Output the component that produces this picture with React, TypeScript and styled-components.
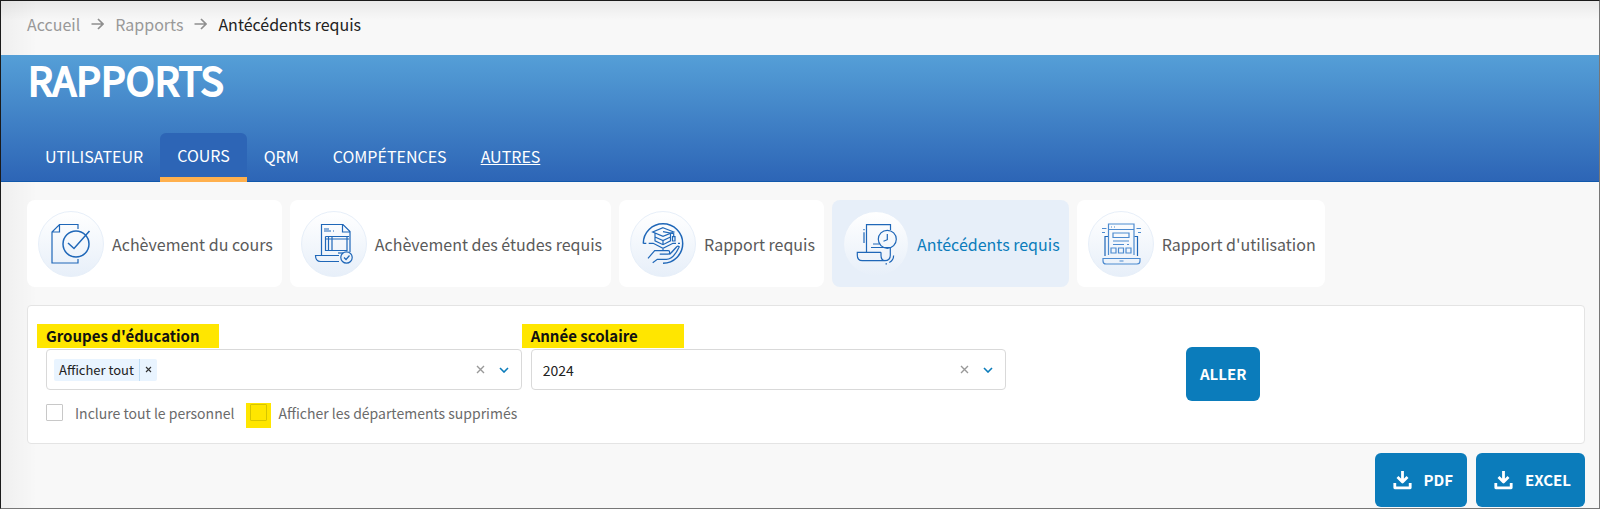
import React, { useState } from "react";
import styled, { createGlobalStyle } from "styled-components";

const GlobalStyle = createGlobalStyle`
  *, *::before, *::after { box-sizing: border-box; }
  body {
    margin: 0;
    background: #f8f8f8;
    color: #222;
    font-family: "Noto Sans CJK SC", "Noto Sans", sans-serif;
    font-size: 16px;
    line-height: 24px;
  }
  button, input, select { font: inherit; color: inherit; }
`;

const Page = styled.div`
  min-height: 100vh;
  border: 1px solid #1a1a1a;
  border-right-color: #777;
  border-bottom-color: #777;
  background:
    linear-gradient(to right, rgba(0, 0, 0, 0.04), transparent 36px),
    linear-gradient(to bottom, rgba(0, 0, 0, 0.06), transparent 20px),
    #f8f8f8;
`;

const Breadcrumb = styled.nav`
  padding: 11px 26px 19px;
  ol {
    display: flex;
    align-items: center;
    gap: 11px;
    margin: 0;
    padding: 0;
    list-style: none;
  }
  li {
    display: flex;
    align-items: center;
    gap: 11px;
  }
`;

const CrumbLink = styled.a`
  color: #999;
  text-decoration: none;
`;

const Header = styled.header`
  padding: 0 26px;
  background: linear-gradient(to bottom, #559fd7, #2d65b6);
  border-bottom: 1px solid #1158ab;
  color: #fff;
`;

const Title = styled.h1`
  margin: 0;
  padding-left: 1px;
  font-size: 39px;
  line-height: 48px;
  font-weight: 400;
  -webkit-text-stroke: 2px #fff;
`;

const Tabs = styled.nav`
  display: flex;
  align-items: flex-end;
  padding: 30px 1px 0;
`;

const Tab = styled.a<{ $active?: boolean; $underline?: boolean }>`
  padding: 10px 17px 13px;
  color: #fff;
  text-decoration: ${(p) => (p.$underline ? "underline" : "none")};
  ${(p) =>
    p.$active &&
    `
    padding-bottom: 10px;
    background: #2d65b6;
    border-radius: 6px 6px 0 0;
    border-bottom: 5px solid #ffb04d;
    margin-bottom: -1px;
  `}
`;

const Content = styled.main`
  padding: 18px 14px 1px 26px;
`;

const Cards = styled.nav`
  display: flex;
  flex-wrap: wrap;
  gap: 8px;
`;

const Card = styled.a<{ $active?: boolean }>`
  display: flex;
  align-items: center;
  gap: 8px;
  padding: 11px 9px 10px 11px;
  border-radius: 8px;
  background: ${(p) => (p.$active ? "#e7eff9" : "#fff")};
  color: ${(p) => (p.$active ? "#0b7cbb" : "#5a5a5a")};
  text-decoration: none;
`;

const IconDisc = styled.span`
  display: grid;
  place-items: center;
  width: 66px;
  height: 66px;
  border-radius: 50%;
  border: 1px solid #e7eff9;
  background: linear-gradient(to bottom, #fff, #e7eff9);
`;

const Panel = styled.form`
  display: grid;
  grid-template-columns: 19fr 19fr 22fr;
  column-gap: 9px;
  margin-top: 18px;
  padding: 18px 18px 15px 18px;
  border: 1px solid #e4e4e4;
  border-radius: 4px;
  background: #fff;
`;

const Field = styled.div`
  display: flex;
  flex-direction: column;
  align-items: flex-start;
  min-width: 0;
`;

const FieldLabel = styled.label<{ $tail: number }>`
  margin-left: -9px;
  padding: 0 ${(p) => p.$tail}px 0 9px;
  background: #ffe600;
  color: #111;
  font-size: 15px;
  font-weight: 700;
`;

const Control = styled.div`
  display: flex;
  align-items: center;
  gap: 14px;
  width: 100%;
  height: 41px;
  margin-top: 1px;
  padding: 0 12px 0 7px;
  border: 1px solid #d9d9d9;
  border-radius: 4px;
  color: #222;
  font-size: 14px;
`;

const Chip = styled.span`
  display: flex;
  height: 22px;
  line-height: 22px;
  border-radius: 2px;
  background: #e9f4ff;
  font-size: 13px;
  white-space: nowrap;
`;

const ChipText = styled.span`
  padding: 0 5px;
`;

const ChipRemove = styled.button`
  display: grid;
  place-items: center;
  width: 18px;
  padding: 0;
  border: 0;
  border-left: 1px solid #bfddf5;
  background: none;
`;

const ComboInput = styled.input`
  flex: 1;
  min-width: 0;
  border: 0;
  outline: 0;
  background: none;
`;

const YearSelect = styled.select`
  flex: 1;
  min-width: 0;
  padding: 0 4px;
  border: 0;
  outline: 0;
  appearance: none;
  background: none;
`;

const IconButton = styled.button`
  display: grid;
  place-items: center;
  padding: 0;
  border: 0;
  background: none;
`;

const Checks = styled.div`
  display: flex;
  align-items: flex-start;
  gap: 12px;
  margin-top: 13px;
  color: #6b6b6b;
  font-size: 14px;
`;

const CheckLabel = styled.label`
  display: flex;
  align-items: flex-start;
  white-space: nowrap;
  line-height: 20px;
`;

const CheckBoxHolder = styled.span<{ $marked?: boolean }>`
  display: flex;
  width: ${(p) => (p.$marked ? 25 : 17)}px;
  height: 25px;
  margin-right: ${(p) => (p.$marked ? 7 : 12)}px;
  padding: ${(p) => (p.$marked ? "1px 4px" : "1px 0")};
  background: ${(p) => (p.$marked ? "#ffe600" : "none")};
`;

const CheckBox = styled.input<{ $marked?: boolean }>`
  appearance: none;
  width: 17px;
  height: 17px;
  margin: 0;
  border: 1px solid ${(p) => (p.$marked ? "#d6c500" : "#c8c8c8")};
  border-radius: 1px;
  background: ${(p) => (p.$marked ? "#ffe600" : "#fff")};
  &:checked { background: #0b7cbb; }
`;

const GoCell = styled.div`
  display: flex;
  align-items: flex-start;
  padding: 23px 0 0 31%;
`;

const ActionButton = styled.button`
  display: inline-flex;
  align-items: center;
  gap: 12px;
  height: 54px;
  padding: 0 14px;
  border: 0;
  border-radius: 6px;
  background: #0b7cbb;
  color: #fff;
  font-size: 15px;
  font-weight: 700;
`;

const Exports = styled.div`
  display: flex;
  justify-content: flex-end;
  gap: 9px;
  margin-top: 9px;
  ${ActionButton} { padding-left: 18px; }
`;

const Arrow = () => (
  <svg width="13" height="12" viewBox="0 0 13 12" fill="none" stroke="#8f8f8f" strokeWidth="1.7" aria-hidden="true">
    <path d="M0.5 6H12M7 1l5 5-5 5" />
  </svg>
);

const Cross = () => (
  <svg width="9" height="9" viewBox="0 0 9 9" stroke="#999" strokeWidth="1.4" aria-hidden="true">
    <path d="M1 1l7 7M8 1L1 8" />
  </svg>
);

const SmallCross = () => (
  <svg width="7" height="7" viewBox="0 0 7 7" stroke="#333" strokeWidth="1.1" aria-hidden="true">
    <path d="M1 1l5 5M6 1L1 6" />
  </svg>
);

const Chevron = () => (
  <svg width="10" height="6" viewBox="0 0 10 6" fill="none" stroke="#0b7cbb" strokeWidth="1.6" aria-hidden="true">
    <path d="M1 1l4 4 4-4" />
  </svg>
);

const Download = () => (
  <svg width="19" height="20" viewBox="0 0 19 20" fill="none" stroke="#fff" strokeWidth="2.800" aria-hidden="true">
    <path d="M9.500 1v10M4.500 7l5 5 5-5M1.800 13v4.800h15.400V13" strokeLinejoin="round" />
  </svg>
);

const Drawing = ({ children }: { children: React.ReactNode }) => (
  <svg width="42" height="42" viewBox="0 0 42 42" fill="none" stroke="#1f67b8" strokeWidth="1.2" aria-hidden="true">
    {children}
  </svg>
);

const CheckedPage = () => (
  <Drawing>
    <path d="M28 6V1.500H9.500L2 9v31h26v-4M2 9h7.500V1.500" />
    <circle cx="26" cy="21" r="13" strokeWidth="1.500" />
    <path d="M18 20l6 5.500L39.500 8" strokeWidth="1.500" />
  </Drawing>
);

const StudyPage = () => (
  <Drawing>
    <path d="M8.500 33V1.500H30l7 7V29M29.500 1.500V9H37" />
    <path d="M11 6h5M11 8h7M20 8h1" />
    <path d="M12.500 13.500H36M12.500 16H36M12.500 13.500V27.500H34V13.500M15.500 13.500v14M19 13.500v14" />
    <path d="M26 32.500H2.500c0 4 2 6 5 6H26" />
    <path d="M25 30h5" />
    <circle cx="33.500" cy="34.500" r="5.700" />
    <path d="M31 34.500l2 2 3.500-4" />
  </Drawing>
);

const HandCap = () => (
  <Drawing>
    <path d="M1.300 20.500a19.700 19.700 0 0 1 39.400 0A19.700 19.700 0 0 1 21 40.200" strokeWidth="1.500" />
    <path d="M21 4.700L31.700 9 21 13.300 10.700 9zM13 10.500v7.300l8 3.900 7.500-3.900V11M13 14l8 3.500 7.500-3.500M21 17.500v4" />
    <path d="M21 8.700l10.700 2v3M30.500 13.700h2.500v4.300h-2.500z" />
    <path d="M1.300 20.300h3M6.700 20.300h4.500L21 25.300l10-5h3M36 20.300h2M21 25.300v2.400" />
    <path d="M6 35.300l6.700-7.600h13.500c2 0 2 3.500 0 3.500h-8.500" />
    <path d="M10.700 39.700l4.600-3.400h9c5 0 10-6 13-12.500-1-1-2-1-3 .5l-5 5.500M27.500 31.500l7-7.500" />
  </Drawing>
);

const ScrollClock = () => (
  <Drawing>
    <path d="M11.500 29.300V1.700h24V7" />
    <circle cx="32.300" cy="16.300" r="9" />
    <path d="M32.300 11v5.700l-3.800 1.500M9 9.300V20M9 6v1.300M18 21h6.500M16 24.500h19.300" />
    <path d="M26 29.300H2.300v3c0 4 2 5.400 5 5.400h22.500c3.500 0 5.500-2 5.500-5.400v-7.800M26 29.300v3c0 3.500 1.500 5.400 4 5.400" />
    <path d="M38.600 32.500c0 3-1.500 5.500-4.300 7M30.500 40.800h1.500" />
  </Drawing>
);

const LaptopReport = () => (
  <Drawing>
    <g stroke="#4d8bd0">
      <path d="M8.500 32V1H34v31M8.500 6.500H34M11 4h1M14 4h1" />
      <path d="M13 10h16v4.500H13zM13 18h16M13 21.500h11M27 21.500h2M11 25h5v5h-5zM18.500 25h5v5h-5zM26 25h5v5h-5z" />
      <path d="M8 13.500H5V33M34.500 13.500h3V33" stroke="#1f67b8" />
      <path d="M2 5.500h4.500M2 9.500h3M36.500 5.500H41M38 9.500h3" />
      <path d="M3 35.500h37v2.500c0 2-1 3-3 3H6c-2 0-3-1-3-3zM19.500 38h4" />
    </g>
  </Drawing>
);

const cards = [
  { text: "Achèvement du cours", icon: <CheckedPage /> },
  { text: "Achèvement des études requis", icon: <StudyPage /> },
  { text: "Rapport requis", icon: <HandCap /> },
  { text: "Antécédents requis", icon: <ScrollClock />, active: true },
  { text: "Rapport d'utilisation", icon: <LaptopReport /> },
];

export default function App() {
  const [year, setYear] = useState("2024");
  return (
    <Page>
      <GlobalStyle />
      <Breadcrumb aria-label="Fil d'Ariane">
        <ol>
          <li><CrumbLink href="#accueil">Accueil</CrumbLink><Arrow /></li>
          <li><CrumbLink href="#rapports">Rapports</CrumbLink><Arrow /></li>
          <li aria-current="page">Antécédents requis</li>
        </ol>
      </Breadcrumb>
      <Header>
        <Title>RAPPORTS</Title>
        <Tabs>
          <Tab href="#utilisateur">UTILISATEUR</Tab>
          <Tab href="#cours" $active>COURS</Tab>
          <Tab href="#qrm">QRM</Tab>
          <Tab href="#competences">COMPÉTENCES</Tab>
          <Tab href="#autres" $underline>AUTRES</Tab>
        </Tabs>
      </Header>
      <Content>
        <Cards>
          {cards.map((c) => (
            <Card key={c.text} href="#rapport" $active={c.active}>
              <IconDisc>{c.icon}</IconDisc>
              {c.text}
            </Card>
          ))}
        </Cards>
        <Panel onSubmit={(e) => e.preventDefault()}>
          <Field>
            <FieldLabel htmlFor="groups" $tail={19}>Groupes d'éducation</FieldLabel>
            <Control>
              <Chip>
                <ChipText>Afficher tout</ChipText>
                <ChipRemove type="button" aria-label="Retirer"><SmallCross /></ChipRemove>
              </Chip>
              <ComboInput id="groups" role="combobox" aria-expanded="false" />
              <IconButton type="button" aria-label="Effacer les groupes"><Cross /></IconButton>
              <IconButton type="button" aria-label="Ouvrir les groupes"><Chevron /></IconButton>
            </Control>
            <Checks>
              <CheckLabel>
                <CheckBoxHolder><CheckBox type="checkbox" /></CheckBoxHolder>
                Inclure tout le personnel
              </CheckLabel>
              <CheckLabel>
                <CheckBoxHolder $marked><CheckBox type="checkbox" $marked /></CheckBoxHolder>
                Afficher les départements supprimés
              </CheckLabel>
            </Checks>
          </Field>
          <Field>
            <FieldLabel htmlFor="year" $tail={46}>Année scolaire</FieldLabel>
            <Control>
              <YearSelect id="year" value={year} onChange={(e) => setYear(e.target.value)}>
                <option>2024</option>
                <option>2023</option>
              </YearSelect>
              <IconButton type="button" aria-label="Effacer l'année"><Cross /></IconButton>
              <Chevron />
            </Control>
          </Field>
          <GoCell><ActionButton type="submit">ALLER</ActionButton></GoCell>
        </Panel>
        <Exports>
          <ActionButton type="button"><Download />PDF</ActionButton>
          <ActionButton type="button"><Download />EXCEL</ActionButton>
        </Exports>
      </Content>
    </Page>
  );
}
